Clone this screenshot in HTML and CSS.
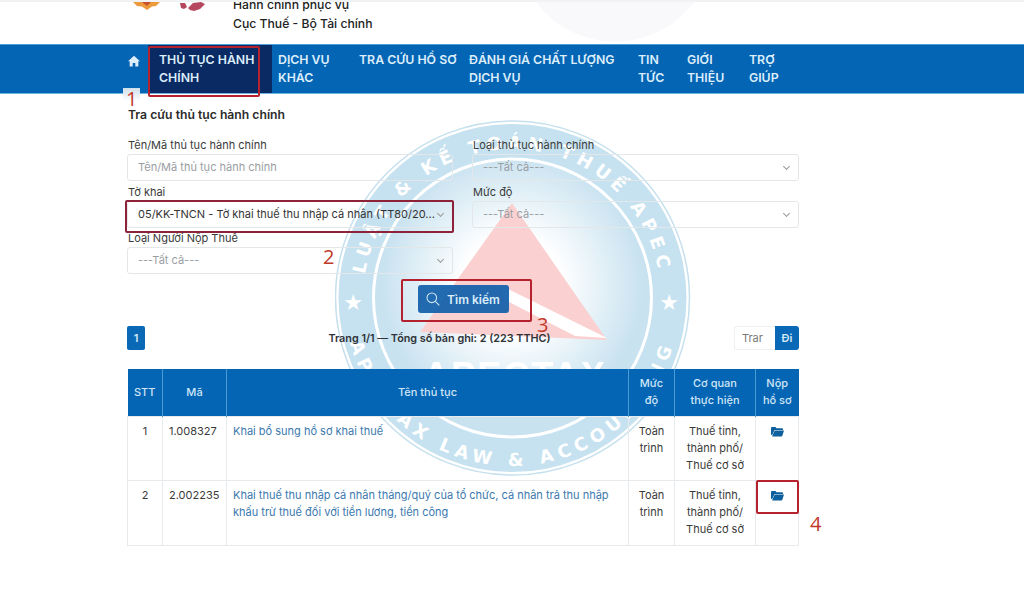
FILE: index.html
```html
<!DOCTYPE html>
<html lang="vi">
<head>
<meta charset="UTF-8" />
<meta name="viewport" content="width=device-width, initial-scale=1" />
<title>Tra cứu thủ tục hành chính</title>
<link rel="stylesheet" href="styles.css">
</head>
<body>

<!-- HEADER -->
<header class="site-header">
    <svg class="logos" width="80" height="12" viewBox="0 0 80 12">
        <path d="M0 0h27l-4 4-4 .5L14 8 9 4.500 4 4z" fill="#ec9a3c"/>
        <path d="M9 0h9l-4 4z" fill="#c9502c"/>
        <path d="M47 1l5 0 2 4-3 2-3-1zM55 6l5-5 8-1 4 2-5 5-6 2-4-1z" fill="#b5485e"/>
    </svg>
    <div class="org-name">
        <div>Hành chính phục vụ</div>
        <div>Cục Thuế - Bộ Tài chính</div>
    </div>
</header>

<!-- NAV -->
<nav class="main-nav">
    <a class="nav-home" href="#">
        <svg width="12" height="12" viewBox="0 0 12 12"><path d="M6 .8L0 6.300h1.700V11.500h3V8h2.600v3.500h3V6.300H12z" fill="#dceefa"/></svg>
    </a>
    <a class="nav-item active" href="#">THỦ TỤC HÀNH CHÍNH</a>
    <a class="nav-item" href="#">DỊCH VỤ KHÁC</a>
    <a class="nav-item" href="#">TRA CỨU HỒ SƠ</a>
    <a class="nav-item" href="#">ĐÁNH GIÁ CHẤT LƯỢNG DỊCH VỤ</a>
    <a class="nav-item" href="#">TIN TỨC</a>
    <a class="nav-item" href="#">GIỚI THIỆU</a>
    <a class="nav-item" href="#">TRỢ GIÚP</a>
</nav>

<!-- WATERMARK -->
<svg class="watermark" width="356" height="356" viewBox="335 120 356 356">
    <defs>
        <radialGradient id="disc" cx="512" cy="285" r="139" gradientUnits="userSpaceOnUse">
            <stop offset="0.35" stop-color="#ffffff"/>
            <stop offset="0.62" stop-color="#e6f2f8"/>
            <stop offset="0.95" stop-color="#c8e2f0"/>
        </radialGradient>
        <path id="arc-top" d="M363 298A149 149 0 0 1 661 298" fill="none"/>
        <path id="arc-bottom" d="M344 298A168 168 0 0 0 680 298" fill="none"/>
    </defs>
    <circle cx="512.500" cy="298" r="177" fill="#fff" stroke="#c6e0ee" stroke-width="1.500"/>
    <circle cx="512.500" cy="298" r="174" fill="#c6e2f0"/>
    <circle cx="512.500" cy="298" r="139" fill="url(#disc)" stroke="#fff" stroke-width="3"/>
    <path d="M512 203L607 340 420 332z" fill="#fad0d0"/>
    <path d="M500 285L607 338 575 336 505 300z" fill="#fff"/>
    <text class="wm-ring" text-anchor="middle"><textPath href="#arc-top" startOffset="50%">LUẬT &amp; KẾ TOÁN THUẾ APEC</textPath></text>
    <text class="wm-ring" text-anchor="middle"><textPath href="#arc-bottom" startOffset="50%">APECTAX LAW &amp; ACCOUNTING</textPath></text>
    <text class="wm-star" x="353" y="310" text-anchor="middle">★</text>
    <text class="wm-star" x="669" y="310" text-anchor="middle">★</text>
    <text class="wm-name" x="515" y="388" text-anchor="middle">APECTAX</text>
</svg>

<!-- CONTENT -->
<main class="content">
    <h1 class="page-title">Tra cứu thủ tục hành chính</h1>

    <form class="search-form">
        <div class="field">
            <label>Tên/Mã thủ tục hành chính</label>
            <div class="control placeholder">Tên/Mã thủ tục hành chính</div>
        </div>
        <div class="field">
            <label>Loại thủ tục hành chính</label>
            <div class="control select placeholder">---Tất cả---</div>
        </div>
        <div class="field">
            <label>Tờ khai</label>
            <div class="control select">05/KK-TNCN - Tờ khai thuế thu nhập cá nhân (TT80/20...</div>
        </div>
        <div class="field">
            <label>Mức độ</label>
            <div class="control select placeholder">---Tất cả---</div>
        </div>
        <div class="field">
            <label>Loại Người Nộp Thuế</label>
            <div class="control select placeholder">---Tất cả---</div>
        </div>
    </form>

    <div class="search-row">
        <button class="search-btn" type="button">
            <svg width="14" height="14" viewBox="0 0 14 14" fill="none" stroke="#cfe6f7" stroke-width="1.100"><circle cx="5.800" cy="5.800" r="4.800"/><path d="M9.300 9.300L13.300 13.300"/></svg>
            Tìm kiếm
        </button>
    </div>

    <div class="pager-row">
        <span class="page-num">1</span>
        <span class="page-info">Trang 1/1 — Tổng số bản ghi: 2 (223 TTHC)</span>
        <span class="page-jump"><span class="page-input">Trar</span><span class="page-go">Đi</span></span>
    </div>

    <table class="result-table">
        <colgroup>
            <col class="c-stt"><col class="c-ma"><col class="c-ten"><col class="c-muc"><col class="c-cq"><col class="c-nop">
        </colgroup>
        <thead>
            <tr>
                <th>STT</th>
                <th>Mã</th>
                <th>Tên thủ tục</th>
                <th>Mức<br>độ</th>
                <th>Cơ quan<br>thực hiện</th>
                <th>Nộp<br>hồ sơ</th>
            </tr>
        </thead>
        <tbody>
            <tr>
                <td class="center">1</td>
                <td>1.008327</td>
                <td><a href="#">Khai bổ sung hồ sơ khai thuế</a></td>
                <td class="center">Toàn<br>trình</td>
                <td class="center">Thuế tỉnh,<br>thành phố/<br>Thuế cơ sở</td>
                <td class="center"><svg class="folder" width="13" height="11" viewBox="0 0 13 11"><path d="M0 2a1 1 0 0 1 1-1h3.500l1 1.200H11a1 1 0 0 1 1 1V4H3.500L1.500 8.500 0 9z" fill="#0d5f9e"/><path d="M3.700 4.500H13l-1.700 5.200a1 1 0 0 1-1 .8H1z" fill="#0d5f9e"/></svg></td>
            </tr>
            <tr>
                <td class="center">2</td>
                <td>2.002235</td>
                <td><a href="#">Khai thuế thu nhập cá nhân tháng/quý của tổ chức, cá nhân trả thu nhập khấu trừ thuế đối với tiền lương, tiền công</a></td>
                <td class="center">Toàn<br>trình</td>
                <td class="center">Thuế tỉnh,<br>thành phố/<br>Thuế cơ sở</td>
                <td class="center"><svg class="folder" width="13" height="11" viewBox="0 0 13 11"><path d="M0 2a1 1 0 0 1 1-1h3.500l1 1.200H11a1 1 0 0 1 1 1V4H3.500L1.500 8.500 0 9z" fill="#0d5f9e"/><path d="M3.700 4.500H13l-1.700 5.200a1 1 0 0 1-1 .8H1z" fill="#0d5f9e"/></svg></td>
            </tr>
        </tbody>
    </table>
</main>

<!-- ANNOTATIONS drawn over the screenshot -->
<div class="mark mark-1"></div>
<div class="mark mark-2"></div>
<div class="mark mark-3"></div>
<div class="mark mark-4"></div>
<span class="mark-num num-1">1</span>
<span class="mark-num num-2">2</span>
<span class="mark-num num-3">3</span>
<span class="mark-num num-4">4</span>

</body>
</html>
```

FILE: styles.css
```css
* { margin: 0; padding: 0; box-sizing: border-box; }

body {
    position: relative;
    height: 597px;
    overflow: hidden;
    background: #fff;
    color: #333;
    font-family: Inter, 'Liberation Sans', sans-serif;
    font-size: 11px;
}

a { text-decoration: none; }

/* header */
.site-header {
    display: flex;
    height: 44px;
    padding-left: 133px;
    overflow: hidden;
    border-top: 2px solid #f1f2f3;
    background:
        radial-gradient(circle at 615px -60px, #f9f9fb 0 99px, transparent 100px);
}

.logos { flex: none; margin-right: 20px; }

.org-name {
    margin-top: -7px;
    font-size: 12.200px;
    font-weight: 500;
    line-height: 19px;
    color: #222;
}

/* nav */
.main-nav {
    display: grid;
    grid-template-columns: 21px 124px 81px 110px 169px 49px 62px 56px;
    height: 50px;
    padding-left: 127px;
    background: #0565b5;
    border-top: 1px solid #4ba0d8;
    border-bottom: 1px solid #6db6e4;
}

.nav-home { padding: 10px 0 0 1px; }

.nav-item {
    padding: 6px 0 0 6px;
    color: #dceefa;
    font-size: 12.300px;
    font-weight: 600;
    line-height: 18px;
}

.nav-item.active {
    padding-left: 11px;
    padding-right: 14px;
    background: #0a2a63;
}

/* watermark */
.watermark {
    position: absolute;
    left: 335px;
    top: 120px;
}

.wm-ring {
    font-family: 'DejaVu Sans', sans-serif;
    font-size: 18px;
    font-weight: bold;
    letter-spacing: 5.500px;
    fill: #fff;
}

.wm-star { font-family: 'DejaVu Sans', sans-serif; font-size: 22px; fill: #fff; }

.wm-name { font-family: 'Liberation Sans', sans-serif; font-size: 36px; font-weight: bold; letter-spacing: 2px; fill: #fff; }

/* content */
.content {
    position: relative;
    width: 672px;
    margin-left: 127px;
}

.page-title {
    padding: 13px 0 14px 1px;
    font-size: 12.200px;
    font-weight: 600;
    line-height: 16px;
    color: #2b2b2b;
}

.search-form {
    display: grid;
    grid-template-columns: 326px 327px;
    column-gap: 19px;
    row-gap: 0;
}

.field { height: 46.500px; }

.field label {
    display: block;
    padding-left: 1px;
    height: 17px;
    line-height: 16px;
    color: #3a3a3a;
}

.control {
    height: 27px;
    padding-left: 10px;
    border: 1px solid #e4e7ea;
    border-radius: 3px;
    line-height: 25px;
    color: #333;
    white-space: nowrap;
    overflow: hidden;
}

.control.placeholder { color: #9a9ea3; }

.control.select { position: relative; padding-right: 24px; }

.control.select::after {
    content: "";
    position: absolute;
    right: 9px;
    top: 9px;
    width: 4px;
    height: 4px;
    border-right: 1px solid #999;
    border-bottom: 1px solid #999;
    transform: rotate(45deg);
}

.search-row {
    display: flex;
    justify-content: center;
    padding-top: 8.500px;
}

.search-btn {
    display: flex;
    align-items: center;
    justify-content: center;
    gap: 7px;
    width: 91px;
    height: 28px;
    border: none;
    border-radius: 3px;
    background: rgba(18, 96, 170, 0.93);
    color: #dceefa;
    font-family: inherit;
    font-size: 12px;
    font-weight: 600;
}

.pager-row {
    display: flex;
    justify-content: space-between;
    align-items: center;
    margin-top: 13px;
    height: 24px;
}

.page-num {
    width: 18px;
    height: 24px;
    border-radius: 2px;
    background: #0a69b6;
    color: #d5e9f7;
    text-align: center;
    line-height: 24px;
    font-weight: 600;
}

.page-info { font-weight: 600; color: #2f3338; font-size: 10.800px; }

.page-jump { display: flex; width: 65px; height: 24px; }

.page-input {
    width: 41px;
    padding-left: 7px;
    border: 1px solid #eef0f2;
    border-right: none;
    border-radius: 3px 0 0 3px;
    line-height: 22px;
    color: #777;
    overflow: hidden;
}

.page-go {
    width: 24px;
    border-radius: 0 3px 3px 0;
    background: #0a69b6;
    color: #d5e9f7;
    text-align: center;
    line-height: 24px;
    font-weight: 600;
}

/* table */
.result-table {
    width: 671px;
    margin-top: 19px;
    table-layout: fixed;
    border-collapse: collapse;
    line-height: 17px;
}

.c-stt { width: 35px; }
.c-ma { width: 64px; }
.c-ten { width: 402px; }
.c-muc { width: 46px; }
.c-cq { width: 81px; }
.c-nop { width: 43px; }

.result-table th {
    height: 47px;
    background: #0565b5;
    border-left: 1px solid #4a9bd4;
    color: #cfe5f5;
    font-weight: 500;
    text-align: center;
}

.result-table th:first-child { border-left: none; }

.result-table td {
    height: 64.500px;
    padding: 6px 6px;
    border: 1px solid #e7eaed;
    vertical-align: top;
    color: #3a3a3a;
}

.result-table td.center { text-align: center; padding-left: 2px; padding-right: 2px; }

.result-table a { color: #3b79ae; }

.folder { margin-top: 3px; }

/* annotations */
.mark {
    position: absolute;
    border: 2.500px solid #b5212c;
    border-radius: 2px;
}

.mark-1 { left: 148px; top: 46px; width: 112px; height: 51px; }
.mark-2 { left: 125px; top: 200px; width: 329px; height: 33px; border-color: #8e2238; }
.mark-3 { left: 401px; top: 279px; width: 131px; height: 43px; }
.mark-4 { left: 756px; top: 480px; width: 43px; height: 34px; }

.mark-num {
    position: absolute;
    color: #c0392b;
    font-family: 'Open Sans', sans-serif;
    font-size: 20px;
    line-height: 22px;
}

.num-1 { left: 123px; top: 88px; padding: 0 3px; background: linear-gradient(#cfdfea, #fff 60%); }
.num-2 { left: 323px; top: 246px; }
.num-3 { left: 537px; top: 314px; }
.num-4 { left: 810px; top: 513px; }
```
